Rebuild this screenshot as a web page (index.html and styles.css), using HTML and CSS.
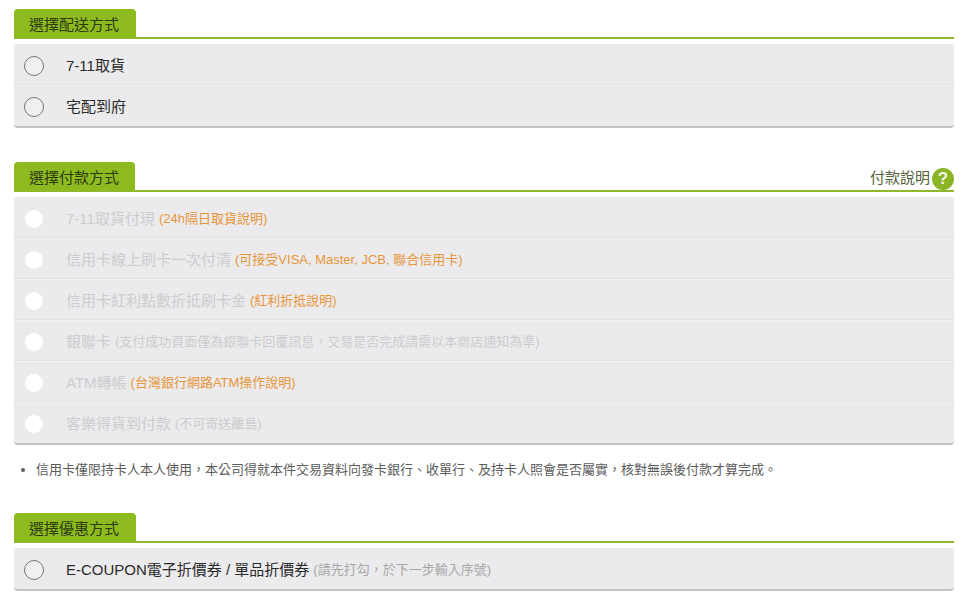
FILE: index.html
```html
<!DOCTYPE html>
<html lang="zh-Hant">
<head>
<meta charset="utf-8">
<title>選擇配送方式</title>
<link rel="stylesheet" href="styles.css">
</head>
<body>
<main class="page">
  <section class="section section-ship">
    <header class="head"><h2 class="tab tab-wide">選擇配送方式</h2></header>
    <ul class="panel">
      <li class="row"><span class="radio"></span><span class="label">7-11取貨</span></li>
      <li class="row"><span class="radio"></span><span class="label">宅配到府</span></li>
    </ul>
  </section>

  <section class="section section-pay">
    <header class="head">
      <h2 class="tab">選擇付款方式</h2>
      <a class="help"><span class="help-text">付款說明</span><span class="help-icon">?</span></a>
    </header>
    <ul class="panel">
      <li class="row off"><span class="radio"></span><span class="label">7-11取貨付現</span><span class="note link">(24h隔日取貨說明)</span></li>
      <li class="row off"><span class="radio"></span><span class="label">信用卡線上刷卡一次付清</span><span class="note link">(可接受VISA, Master, JCB, 聯合信用卡)</span></li>
      <li class="row off"><span class="radio"></span><span class="label">信用卡紅利點數折抵刷卡金</span><span class="note link">(紅利折抵說明)</span></li>
      <li class="row off"><span class="radio"></span><span class="label">銀聯卡</span><span class="note">(支付成功頁面僅為銀聯卡回覆訊息，交易是否完成請需以本商店通知為準)</span></li>
      <li class="row off"><span class="radio"></span><span class="label">ATM轉帳</span><span class="note link">(台灣銀行網路ATM操作說明)</span></li>
      <li class="row off"><span class="radio"></span><span class="label">客樂得貨到付款</span><span class="note">(不可寄送離島)</span></li>
    </ul>
    <ul class="notes">
      <li>信用卡僅限持卡人本人使用，本公司得就本件交易資料向發卡銀行、收單行、及持卡人照會是否屬實，核對無誤後付款才算完成。</li>
    </ul>
  </section>

  <section class="section section-coupon">
    <header class="head"><h2 class="tab tab-wide">選擇優惠方式</h2></header>
    <ul class="panel">
      <li class="row"><span class="radio"></span><span class="label">E-COUPON電子折價券 / 單品折價券</span><span class="note">(請先打勾，於下一步輸入序號)</span></li>
    </ul>
  </section>
</main>
</body>
</html>
```
FILE: styles.css
```css
* { box-sizing: border-box; }
html, body { margin: 0; padding: 0; background: #fff; }
body {
  font-family: "Liberation Sans", "Noto Sans CJK TC", sans-serif;
  color: #222;
  height: 600px;
  overflow: hidden;
}
.page { padding: 9px 7px 0 14px; }
.section-pay { margin-top: 34px; }
.section-coupon { margin-top: 34px; }

.head {
  display: flex;
  justify-content: space-between;
  align-items: flex-end;
  height: 30px;
  border-bottom: 2px solid #8fb82b;
}
.tab {
  margin: 0;
  width: 121px;
  height: 28px;
  padding-left: 15px;
  background: #8dbb1f;
  border-radius: 4px 4px 0 0;
  color: #2f3a12;
  font-size: 15px;
  font-weight: 400;
  line-height: 31px;
}
.tab-wide { width: 122px; }
.help {
  display: flex;
  align-items: center;
  gap: 2px;
  height: 26px;
  margin-bottom: -1px;
  color: #55623a;
  font-size: 15px;
}
.help-text { margin-bottom: 3px; }
.help-icon {
  width: 22px;
  height: 22px;
  margin-top: 2px;
  border-radius: 50%;
  background: #8ab526;
  color: #f4f4e8;
  font-size: 17px;
  font-weight: 700;
  line-height: 22px;
  text-align: center;
}

.panel {
  list-style: none;
  margin: 5px 0 0;
  padding: 0;
  background: #ebeaec;
  border-radius: 4px;
  border-bottom: 2px solid #c4c4c4;
  box-shadow: 0 0 1px rgba(0, 0, 0, .12);
}
.row {
  display: flex;
  align-items: center;
  height: 41px;
  padding-left: 10px;
  border-bottom: 1px solid #e3e2e4;
  box-shadow: 0 1px 0 #f1f0f2;
}
.row:last-child { border-bottom: 0; box-shadow: none; }
.radio {
  flex: none;
  width: 20px;
  height: 20px;
  margin-top: 3px;
  border: 1px solid #777;
  border-radius: 50%;
  background: #f0eff1;
}
.label {
  margin-left: 22px;
  padding-top: 3px;
  font-size: 15px;
  line-height: 20px;
  color: #2a2a2a;
}
.note {
  margin-left: 4px;
  padding-top: 3px;
  font-size: 13px;
  line-height: 20px;
  color: #a8a8aa;
}
.off .radio {
  width: 18px;
  height: 18px;
  margin: 3px 1px 0;
  border: 0;
  background: #fff;
}
.off .label { color: #cdcdcf; }
.off .note { color: #cdcdcf; }
.off .note.link { color: #e8963a; }

.notes {
  margin: 16px 0 0;
  padding: 0 0 0 22px;
  font-size: 13px;
  line-height: 18px;
  color: #5c5c5c;
}
```
